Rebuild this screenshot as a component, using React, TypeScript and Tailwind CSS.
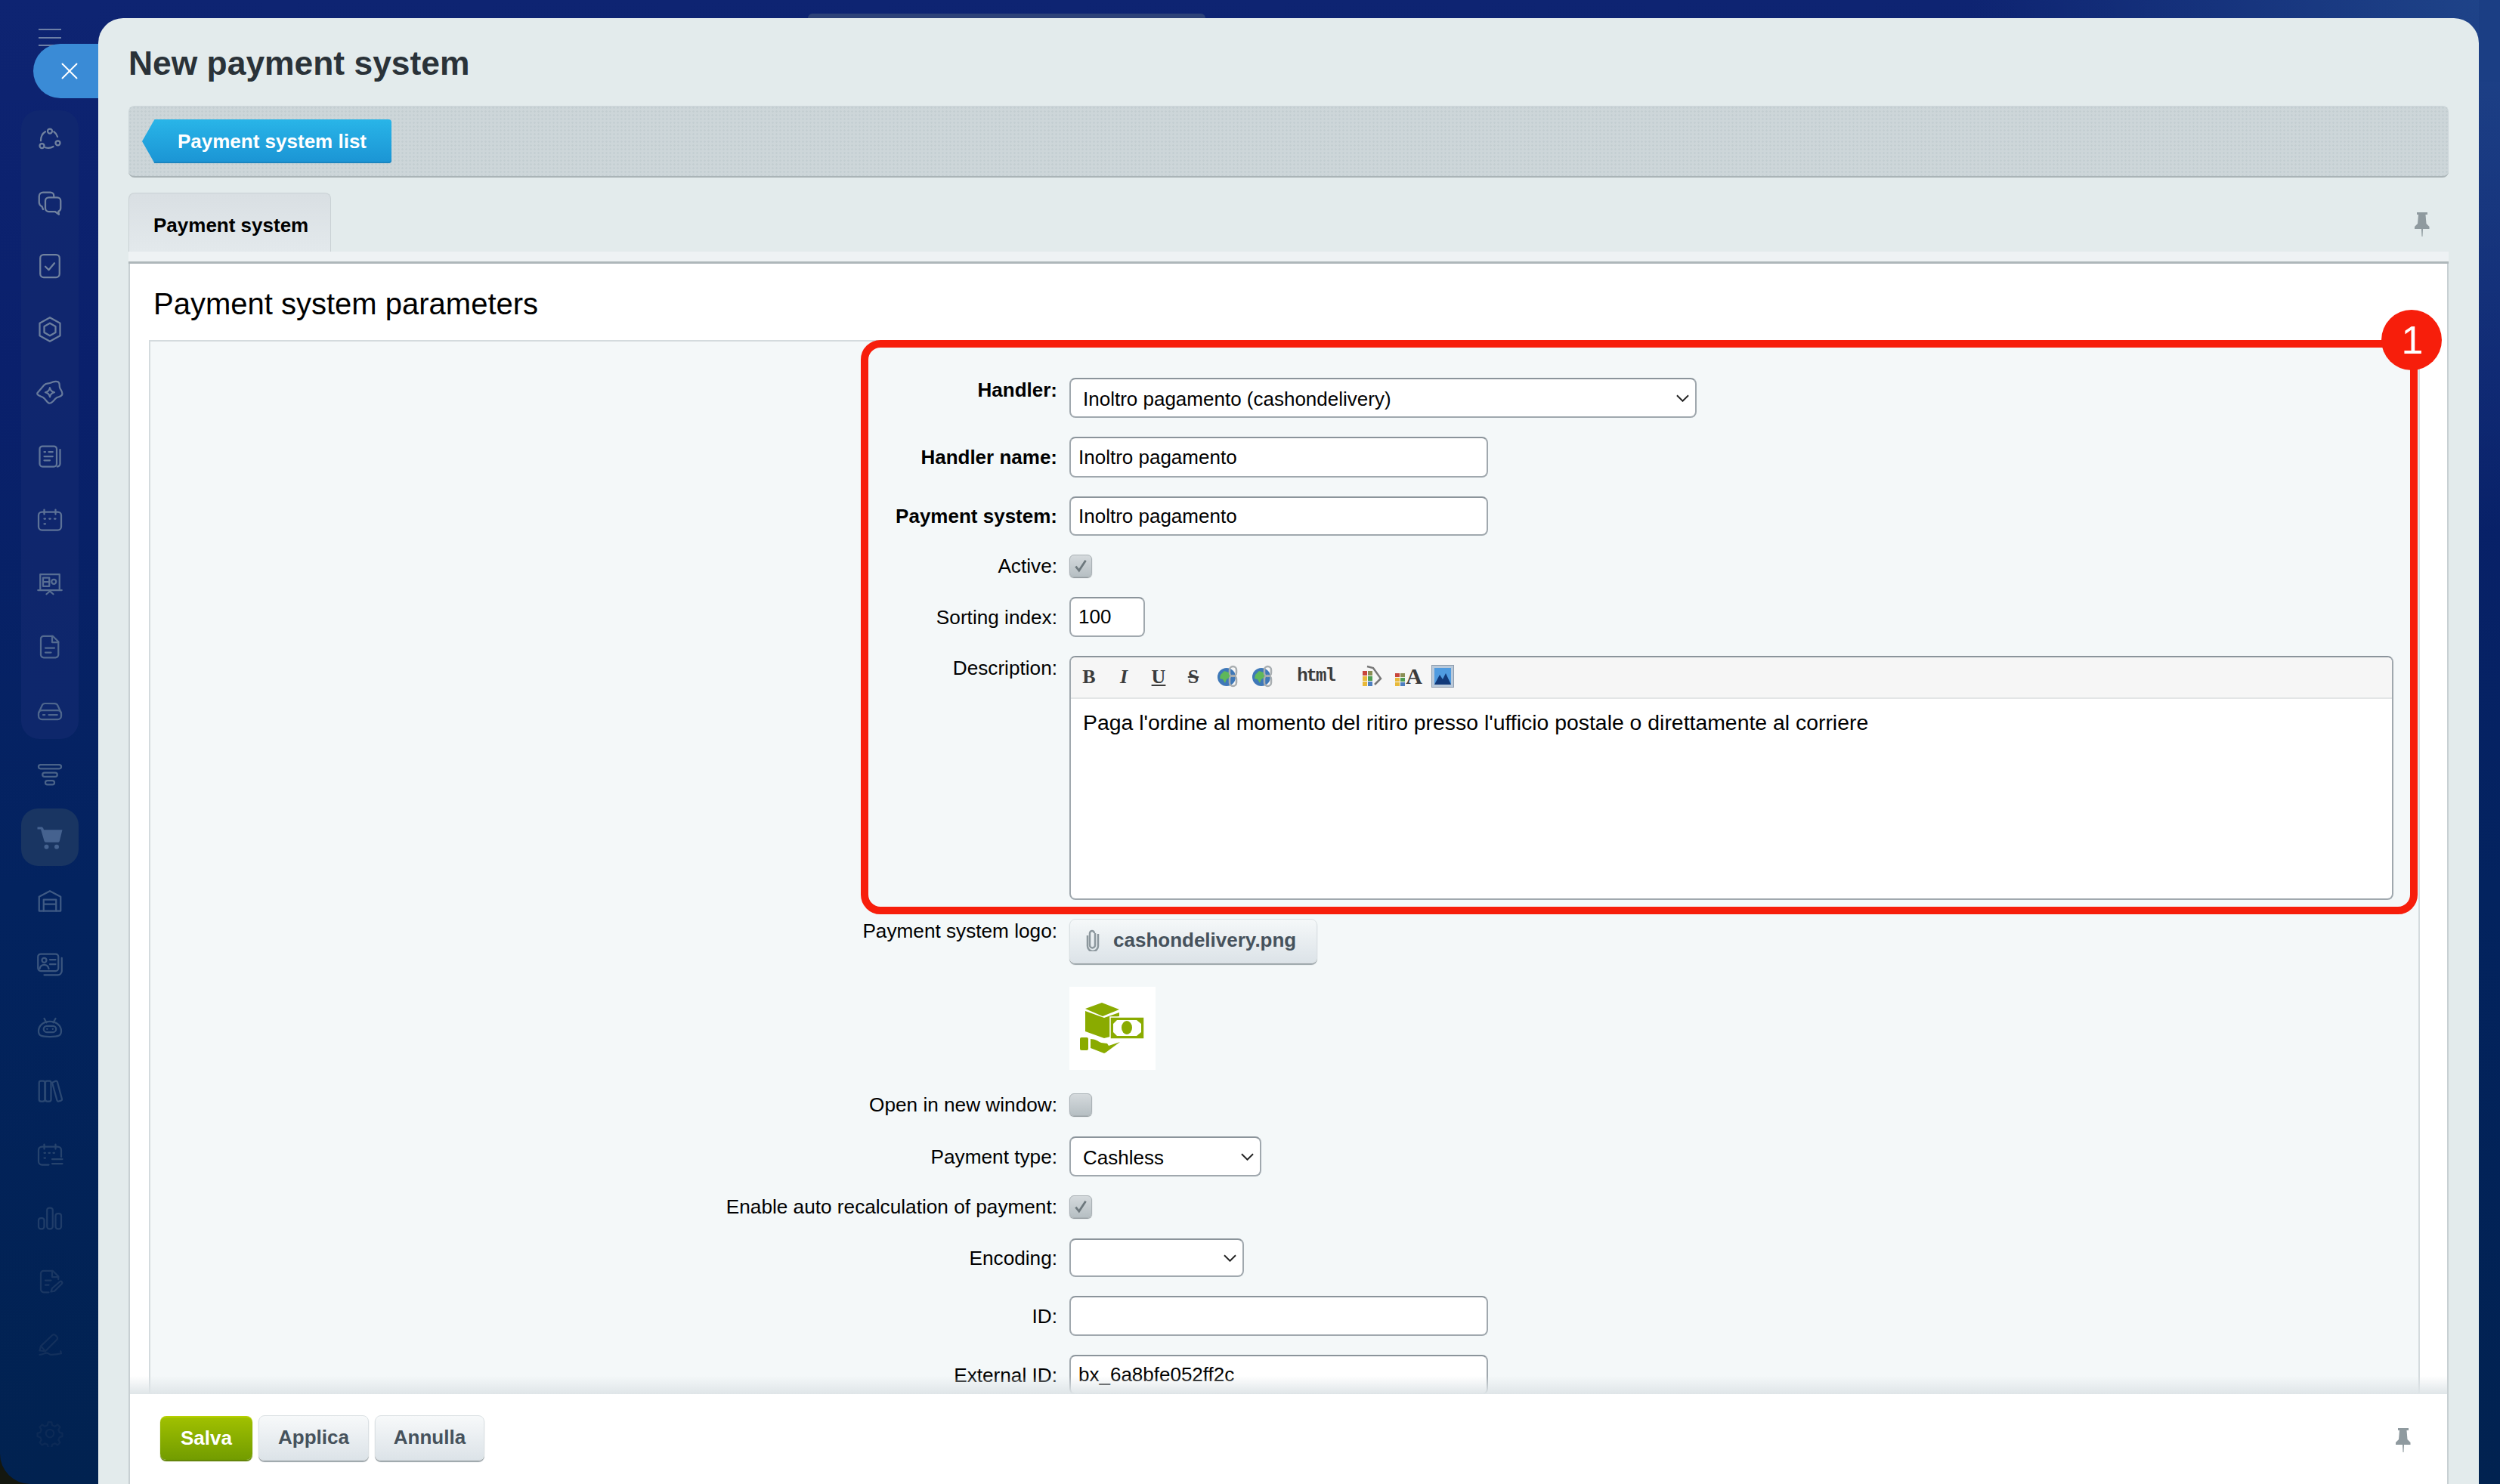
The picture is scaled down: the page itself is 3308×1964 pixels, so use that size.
import React from 'react';
import { X } from 'lucide-react';

const sans = "font-['Liberation_Sans',Arial,sans-serif]";

// sidebar icons, same order as the menu
const menuIcons: React.ReactNode[] = [
  <>
    <circle cx="12" cy="5" r="2" /><circle cx="5" cy="18" r="2" /><circle cx="19" cy="15.5" r="2" />
    <path d="M8 5.5C5.5 7 4 10 4 13.5M15.5 5.5c1.5 1 2.6 2.700 3.200 4.500M8 19.500c2.500.8 5 .5 7-.8" />
  </>,
  <>
    <path d="M15.500 7V6a3 3 0 0 0-3-3H6a3.500 3.500 0 0 0-3.500 3.500v5.500A4 4 0 0 0 5 15.500l1 2.500" />
    <path d="M11 7.500h7.500a3 3 0 0 1 3 3V17a3 3 0 0 1-2 2.800l.5 2.700-3.500-2.500H11a3 3 0 0 1-3-3v-6.500a3 3 0 0 1 3-3z" />
  </>,
  <>
    <rect x="3.500" y="2" width="17" height="20" rx="3" />
    <path d="M8 12.500l3 3 5-6" />
  </>,
  <>
    <path d="M12 1.500l9 5v11l-9 5-9-5v-11z" />
    <path d="M12 6.500l5 2.800v5.400l-5 2.800-5-2.800V9.300z" />
  </>,
  <>
    <path d="M1 12l6-7c2-2 4-1 6-2s6-2 7 0 0 3 1 5 3 4 1.500 6-3.500 1-5.500 3-4 5-6 4-3-4-5-5-6-2-5-4z" />
    <path d="M12 7.500c.5 2.500 1.500 3.500 4 4-2.500.5-3.500 1.500-4 4-.5-2.500-1.500-3.500-4-4 2.500-.5 3.500-1.500 4-4z" />
  </>,
  <>
    <rect x="3" y="3" width="15" height="18" rx="2.500" />
    <path d="M21 6v12.500a2.500 2.500 0 0 1-2.500 2.500M7 8h1M11 8h3.500M7 12h7.500M7 15.500h5" />
  </>,
  <>
    <rect x="2" y="5" width="20" height="16" rx="3" />
    <path d="M7 3v4M17 3v4M7 11h1M11.500 11h1M16 11h1M7 15.500h1" />
  </>,
  <>
    <path d="M1.500 18h21M3.500 18V4h17v14M9 21.500l3-2.500 3 2.500" />
    <rect x="6" y="7" width="5.500" height="7.500" />
    <path d="M6 10.700h5.500" />
    <circle cx="15.500" cy="10.500" r="2" />
  </>,
  <>
    <path d="M6.500 2.500h8l5 5V19a2.500 2.500 0 0 1-2.500 2.500H6.500A2.500 2.500 0 0 1 4 19V5a2.500 2.500 0 0 1 2.500-2.500z" />
    <path d="M14 2.500V8h5.500M8 13h8M8 17h5" />
  </>,
  <>
    <path d="M2 14.500L5 8a3 3 0 0 1 2.800-2h8.400A3 3 0 0 1 19 8l3 6.500" />
    <rect x="2" y="12" width="20" height="8" rx="3" />
    <path d="M6 16h1.500M11 16h7.500" />
  </>,
  <>
    <rect x="2" y="4" width="20" height="3.500" rx="1.750" />
    <rect x="5.500" y="11" width="13" height="3.500" rx="1.750" />
    <rect x="8" y="18" width="8" height="3.500" rx="1.750" />
  </>,
  <g fill="currentColor" stroke="none">
    <path d="M1 3h3.500c.8 0 1.300.4 1.600 1l.6 1.500H23l-2.500 10a1.500 1.500 0 0 1-1.500 1H8.500a1.500 1.500 0 0 1-1.500-1.200L4 5H1z" />
    <circle cx="9" cy="20.500" r="2" /><circle cx="18" cy="20.500" r="2" />
  </g>,
  <>
    <path d="M2.500 21V8.500L12 3.500l9.500 5V21z" />
    <path d="M6.500 21v-10h11v10M6.500 15h11" />
  </>,
  <>
    <rect x="1.500" y="3" width="18" height="15" rx="2.500" />
    <path d="M22.500 6.500V18a3.500 3.500 0 0 1-3.500 3.500H7M12 8h5M12 12h5" />
    <circle cx="7" cy="8.500" r="2" />
    <path d="M3 16c.5-2.500 2-3.500 4-3.500s3.500 1 4 3.500" />
  </>,
  <>
    <path d="M7 4l2 3.500M17 4l-2 3.500" />
    <path d="M12 6.500c6 0 10 4 10 8.500 0 4-2 5-10 5S2 19 2 15c0-4.500 4-8.500 10-8.500z" />
    <rect x="6.500" y="10.500" width="11" height="5.500" rx="2.750" />
    <path d="M9.500 13.200h.1M14.500 13.200h.1" />
  </>,
  <>
    <rect x="2.500" y="3" width="5" height="18" rx="1.500" />
    <rect x="8" y="3" width="5" height="18" rx="1.500" />
    <path d="M14 4.500l3-1.300c.7-.3 1.300 0 1.600.7l4 15c.2.700-.1 1.300-.8 1.500l-2 .6c-.7.200-1.300-.1-1.500-.8z" />
  </>,
  <>
    <path d="M11 21H5a3 3 0 0 1-3-3V8a3 3 0 0 1 3-3h14a3 3 0 0 1 3 3v6" />
    <path d="M7 3v4M17 3v4M7 10.500h1M11 10.500h1M15 10.500h1M7 15h1M14 16h9M14 20h9" />
  </>,
  <>
    <rect x="2" y="12" width="5" height="9.500" rx="2" />
    <rect x="9.500" y="3" width="5" height="18.500" rx="2" />
    <rect x="17" y="8" width="5" height="13.500" rx="2" />
  </>,
  <>
    <path d="M11 21.500H6.500A2.500 2.500 0 0 1 4 19V5a2.500 2.500 0 0 1 2.500-2.500h8l5 5V10" />
    <path d="M14 2.500V8h5.500M8 11h5M8 15h3M13 21l1-3 7-6c1-.8 2.500.8 1.500 2l-6.500 6.500z" />
  </>,
  <>
    <path d="M3 17l1-4L14 3.500c1-1 2-1 3 0l1 1c1 1 1 2 0 3L8 17.500z" />
    <path d="M4 13l4 4.500M3 20.500c3 0 4-1.500 6-1.500s2 1.500 4 1.500 5 0 9-1l-.5-2" />
  </>,
  <>
    <circle cx="12" cy="12" r="3.500" />
    <path d="M10.500 2h3l.6 2.800 2.400 1 2.400-1.500 2.100 2.100-1.500 2.400 1 2.400 2.500.6v3l-2.500.6-1 2.400 1.500 2.400-2.100 2.100-2.400-1.500-2.400 1-.6 2.700h-3l-.6-2.700-2.400-1-2.400 1.500-2.100-2.100 1.500-2.400-1-2.400-2.500-.6v-3l2.500-.6 1-2.400L3 6.400l2.100-2.100 2.400 1.500 2.400-1z" />
  </>,
];

// colour fades out towards the bottom of the menu
const menuColors = [
  'text-[#71829f]', 'text-[#71829f]', 'text-[#71829f]', 'text-[#6c7f9e]', 'text-[#677a9c]',
  'text-[#61769a]', 'text-[#5d7297]', 'text-[#586e93]', 'text-[#536a90]', 'text-[#4e668d]',
  'text-[#4a6389]', 'text-[#45628f]', 'text-[#3f5a84]', 'text-[#3b567f]', 'text-[#314e78]',
  'text-[#2b4873]', 'text-[#26436d]', 'text-[#203d69]', 'text-[#1a3763]', 'text-[#13305c]',
  'text-[#0c2a56]',
];

function MenuIcon({ index }: { index: number }) {
  return (
    <svg viewBox="0 0 24 24" fill="none" stroke="currentColor" strokeWidth="1.500" strokeLinecap="round" strokeLinejoin="round" className={`w-[36px] h-[36px] ${menuColors[index]}`}>
      {menuIcons[index]}
    </svg>
  );
}

function MenuRow({ index, active }: { index: number; active?: boolean }) {
  return (
    <div className={`h-[76px] w-[76px] flex items-center justify-center rounded-[22px] ${active ? 'bg-[#193562]' : ''}`}>
      <MenuIcon index={index} />
    </div>
  );
}

function Sidebar() {
  return (
    <div className="w-[130px] shrink-0 flex flex-col items-start pl-[28px]">
      <div className="h-[146px] shrink-0 pt-[38px] pl-[23px] flex flex-col gap-[8.500px]">
        <div className="w-[30px] h-[2px] bg-[#6d7fa6]" />
        <div className="w-[30px] h-[2px] bg-[#6d7fa6]" />
        <div className="w-[30px] h-[2px] bg-[#6d7fa6]" />
      </div>
      <div className="flex flex-col gap-[8px] rounded-[24px] bg-[#12296f]/70">
        {[0, 1, 2, 3, 4, 5, 6, 7, 8, 9].map((i) => <MenuRow key={i} index={i} />)}
      </div>
      <div className="flex flex-col gap-[8px] mt-[8px]">
        {[10, 11, 12, 13, 14, 15, 16, 17, 18, 19].map((i) => <MenuRow key={i} index={i} active={i === 11} />)}
      </div>
      <div className="mt-[41px]">
        <MenuRow index={20} />
      </div>
    </div>
  );
}

function PinIcon() {
  return (
    <svg viewBox="0 0 20 32" className="w-[20px] h-[32px] text-[#8f9a9f]" fill="currentColor">
      <path d="M3 0h14v3h-2.500l1 12 4 4v3H11l-.5 10h-1L9 22H0v-3l4-4 1-12H3z" />
    </svg>
  );
}

function Label({ children, bold, top }: { children: React.ReactNode; bold?: boolean; top?: boolean }) {
  return (
    <div className={`w-[1200px] shrink-0 text-right leading-[30px] text-[#000] ${bold ? 'font-bold text-[26px]' : 'text-[26.200px]'} ${top ? 'pt-[1px]' : 'self-center'}`}>
      {children}
    </div>
  );
}

function Row({ label, bold, top, children, className }: { label?: string; bold?: boolean; top?: boolean; children: React.ReactNode; className?: string }) {
  return (
    <div className={`flex gap-[16px] ${className ?? ''}`}>
      <Label bold={bold} top={top}>{label}</Label>
      {children}
    </div>
  );
}

function TextBox({ value, width, height = 'h-[53px]' }: { value?: string; width: string; height?: string }) {
  return (
    <div className={`${width} ${height} bg-white border-2 border-[#a0a8ae] border-t-[#8b949b] rounded-[8px] pl-[10px] flex items-center text-[26px] text-[#000]`}>
      {value}
    </div>
  );
}

function SelectBox({ value, width, height = 'h-[53px]' }: { value?: string; width: string; height?: string }) {
  return (
    <div className={`${width} ${height} bg-white border-2 border-[#a0a8ae] border-t-[#8b949b] rounded-[8px] pl-[16px] pr-[8px] flex items-center justify-between text-[26px] text-[#000]`}>
      <span className="pt-[4px]">{value}</span>
      <svg viewBox="0 0 18 10" className="w-[17px] h-[10px]" fill="none" stroke="#222" strokeWidth="2">
        <path d="M1 1l8 8 8-8" />
      </svg>
    </div>
  );
}

function CheckBox({ checked }: { checked?: boolean }) {
  return (
    <div className="w-[30px] h-[30px] rounded-[6px] border border-[#a9b1b5] bg-gradient-to-b from-[#d5dadd] to-[#b6bfc3] shadow-[0_1px_1px_#8a9296] flex items-center justify-center">
      {checked && (
        <svg viewBox="0 0 20 20" className="w-[22px] h-[22px]" fill="none" stroke="#6d787d" strokeWidth="2.500">
          <path d="M4 10.500l4 5 8-12" />
        </svg>
      )}
    </div>
  );
}

function LinkIcon() {
  return (
    <svg viewBox="0 0 30 32" className="w-[30px] h-[32px]">
      <circle cx="13" cy="17" r="12" fill="#3f78b8" />
      <path d="M5 14l5-5 6 2 2 6-5 3-2 5-3-5-4-1z" fill="#5fb85a" />
      <rect x="17" y="3" width="9" height="13" rx="4.500" fill="none" stroke="#a8adb0" strokeWidth="2.500" />
      <rect x="17" y="15" width="9" height="14" rx="4.500" fill="none" stroke="#a8adb0" strokeWidth="2.500" />
    </svg>
  );
}

const toolCell = 'w-[46px] flex justify-center';
const serifTool = "font-['Liberation_Serif',serif] font-bold text-[26px]";

function Toolbar() {
  return (
    <div className="h-[55px] bg-[#f6f6f6] border-b-2 border-[#e3e5e6] flex items-center pl-[1px] pb-[3px] text-[#3b3b3b] rounded-t-[6px]">
      <span className={`${toolCell} ${serifTool}`}>B</span>
      <span className={`${toolCell} ${serifTool} italic`}>I</span>
      <span className={`${toolCell} ${serifTool} underline`}>U</span>
      <span className={`${toolCell} ${serifTool} line-through`}>S</span>
      <span className={toolCell}><LinkIcon /></span>
      <span className={toolCell}><LinkIcon /></span>
      <span className="w-[94px] flex justify-center font-['Liberation_Mono',monospace] font-bold text-[24px] tracking-[-2px]">html</span>
      <span className="w-[56px] flex justify-center">
        <svg viewBox="0 0 30 32" className="w-[30px] h-[32px]">
          <rect x="2" y="9" width="6" height="6" fill="#c8463c" /><rect x="9" y="9" width="6" height="6" fill="#8a8f55" />
          <rect x="2" y="16" width="6" height="6" fill="#e8b93a" /><rect x="9" y="16" width="6" height="6" fill="#4d9e52" />
          <rect x="2" y="23" width="6" height="6" fill="#e8b93a" /><rect x="9" y="23" width="6" height="6" fill="#4d7fc0" />
          <path d="M8 3l8 2 10 14-8 8" fill="none" stroke="#777" strokeWidth="2.500" />
        </svg>
      </span>
      <span className="w-[40px] flex items-end justify-center">
        <svg viewBox="0 0 14 20" className="w-[14px] h-[20px]">
          <rect x="0" y="2" width="6" height="5" fill="#c8463c" /><rect x="7" y="2" width="6" height="5" fill="#8a8f55" />
          <rect x="0" y="8" width="6" height="5" fill="#e8b93a" /><rect x="7" y="8" width="6" height="5" fill="#4d9e52" />
          <rect x="0" y="14" width="6" height="5" fill="#e8b93a" /><rect x="7" y="14" width="6" height="5" fill="#4d7fc0" />
        </svg>
        <span className="font-['Liberation_Serif',serif] font-bold text-[30px] leading-[28px]">A</span>
      </span>
      <span className="w-[50px] flex justify-center">
        <svg viewBox="0 0 30 30" className="w-[30px] h-[30px]">
          <rect x="0.500" y="0.500" width="29" height="29" fill="#b9c9da" stroke="#8e9cac" />
          <rect x="4" y="4" width="22" height="22" fill="#4f9be0" />
          <path d="M4 26l7-13 4 6 4-8 7 15z" fill="#123a7a" />
        </svg>
      </span>
    </div>
  );
}

function CashLogo() {
  return (
    <svg viewBox="0 0 114 110" className="w-[114px] h-[110px]" fill="#8aab00">
      <path d="M21 29l22-8 23 9-22 9z" />
      <path d="M21 32l25 9 20-7v5l-12 4v23l-8 2-25-9z" />
      <rect x="54" y="40" width="45" height="29" stroke="#fff" strokeWidth="1.500" />
      <path fill="#fff" d="M63 44h26l6 5v11l-6 5H63l-5-5V49z" />
      <ellipse cx="76" cy="54" rx="7" ry="9" />
      <rect x="14" y="67" width="11" height="17" rx="2" />
      <path d="M28 69c6 0 10 3 14 5l8 1 2 3 15-5-19 14-2 1-18-7z" />
    </svg>
  );
}

function PaymentForm() {
  return (
    <div className="relative ml-[25px] w-[3005px] h-[1400px] bg-[#f4f8f9] border-l-2 border-r-2 border-t-2 border-[#d4dbde] pt-[48px]">
      <div className="flex flex-col gap-[25px]">
        <Row label="Handler:" bold top>
          <SelectBox value="Inoltro pagamento (cashondelivery)" width="w-[830px]" />
        </Row>
        <Row label="Handler name:" bold>
          <TextBox value="Inoltro pagamento" width="w-[554px]" height="h-[54px]" />
        </Row>
        <Row label="Payment system:" bold>
          <TextBox value="Inoltro pagamento" width="w-[554px]" height="h-[52px]" />
        </Row>
        <Row label="Active:">
          <CheckBox checked />
        </Row>
        <Row label="Sorting index:" className="mt-[1px]">
          <TextBox value="100" width="w-[100px]" />
        </Row>
        <Row label="Description:" top>
          <div className="w-[1752px] h-[323px] bg-white border-2 border-[#a0a8ae] border-t-[#8b949b] rounded-[8px]">
            <Toolbar />
            <div className="pl-[16px] pt-[14px] text-[28.400px] leading-[34px] text-[#000]">
              Paga l'ordine al momento del ritiro presso l'ufficio postale o direttamente al corriere
            </div>
          </div>
        </Row>
        <Row label="Payment system logo:" top>
          <div className="w-[328px] h-[59px] rounded-[8px] border border-[#dbe1e4] bg-gradient-to-b from-[#f5f8f9] to-[#dce3e8] shadow-[0_2px_1px_#9aa3a8] flex items-center pl-[21px] pb-[3px] gap-[18px] text-[26px] font-bold text-[#46525c]">
            <svg viewBox="0 0 18 30" className="w-[18px] h-[30px]" fill="none" stroke="#8c979d" strokeWidth="2.500">
              <path d="M12 6v16a3.500 3.500 0 0 1-7 0V6a3 3 0 0 1 6 0" />
              <path d="M2 9v14a7 7 0 0 0 14 0V7" />
            </svg>
            cashondelivery.png
          </div>
        </Row>
        <Row top className="mt-[6px]">
          <div className="w-[114px] h-[110px] bg-white"><CashLogo /></div>
        </Row>
        <Row label="Open in new window:" className="mt-[6px]">
          <CheckBox />
        </Row>
        <Row label="Payment type:" className="mt-[2px]">
          <SelectBox value="Cashless" width="w-[254px]" />
        </Row>
        <Row label="Enable auto recalculation of payment:">
          <CheckBox checked />
        </Row>
        <Row label="Encoding:" className="mt-[2px]">
          <SelectBox width="w-[231px]" height="h-[51px]" />
        </Row>
        <Row label="ID:">
          <TextBox width="w-[554px]" />
        </Row>
        <Row label="External ID:">
          <TextBox value="bx_6a8bfe052ff2c" width="w-[554px]" />
        </Row>
      </div>

      {/* red annotation drawn over the form */}
      <div className="absolute left-[940px] top-[-2px] w-[2060px] h-[760px] border-[10px] border-[#f71e0b] rounded-[26px]" />
      <div className="absolute left-[2952px] top-[-42px] w-[80px] h-[80px] rounded-full bg-[#f71e0b] flex items-center justify-center text-white text-[52px] leading-none pl-[2px]">
        1
      </div>
    </div>
  );
}

export default function App() {
  return (
    <div className="w-[3308px] h-[1964px] overflow-hidden bg-[#14170f]">
      <div className={`${sans} relative w-full h-full overflow-hidden flex rounded-bl-[40px] bg-[radial-gradient(circle_at_100%_0,#1f4489_0,transparent_700px),linear-gradient(180deg,#0e2472_0%,#0a206c_25%,#03235f_60%,#012250_100%)]`}>
        <Sidebar />

        {/* window behind the slider */}
        <div className="absolute left-[1069px] top-[18px] w-[526px] h-[6px] rounded-t-[8px] bg-[#2d4278]" />
        <div className="absolute left-[3280px] top-0 w-[28px] h-[108px] bg-[#1b3e84]" />

        <div className="absolute left-[44px] top-[58px] w-[90px] h-[72px] rounded-l-[36px] bg-[#3a8bd6] flex items-center pl-[29px]">
          <X className="w-[38px] h-[38px] text-white" strokeWidth={1.200} />
        </div>

        <div className="relative mt-[24px] w-[3150px] h-[1940px] flex flex-col rounded-t-[33px] bg-[#e3ebec] overflow-hidden">
          <div className="px-[40px] pt-[30px] h-[116px] shrink-0 text-[#2a3238] text-[44.400px] leading-[60px] font-bold">
            New payment system
          </div>

          <div className="mx-[40px] h-[95px] shrink-0 rounded-[8px] border-b-2 border-[#aab4b7] bg-[#cdd6d9] bg-[radial-gradient(#c3ced1_1px,transparent_1.500px)] bg-[length:5px_5px] pl-[18px] pt-[18px]">
            <div className="w-[330px] h-[58px] bg-gradient-to-b from-[#29b5e8] to-[#1b94d4] shadow-[inset_0_-2px_0_#1a85c0] [clip-path:polygon(5%_0,100%_0,100%_100%,5%_100%,0_50%)] rounded-[4px] text-white text-[26px] font-bold flex items-center justify-center pl-[14px]">
              Payment system list
            </div>
          </div>

          <div className="mx-[40px] mt-[20px] h-[78px] shrink-0 flex items-stretch justify-between">
            <div className="w-[268px] rounded-t-[8px] border border-b-0 border-[#c9d1d4] bg-gradient-to-b from-[#d9dfe3] to-[#e3e9ec] text-[#000] text-[26px] font-bold flex items-center pl-[32px] pt-[7px]">
              Payment system
            </div>
            <div className="pr-[25px] pt-[26px]"><PinIcon /></div>
          </div>

          <div className="mx-[40px] h-[16px] shrink-0 bg-[#eef2f4] border-b-[3px] border-[#aeb7ba]" />

          <div className="relative flex-1 min-h-0 mx-[40px] bg-white border-x-2 border-[#c8d0d3] overflow-hidden">
            <div className="px-[31px] pt-[28px] h-[101px] text-[40px] leading-[50px] text-[#000]">
              Payment system parameters
            </div>
            <PaymentForm />
            <div className="absolute left-0 right-0 bottom-0 h-[24px] bg-gradient-to-b from-transparent to-[#dfe5e8]" />
          </div>

          <div className="mx-[40px] h-[119px] shrink-0 bg-white border-x-2 border-[#c8d0d3] flex items-center justify-between pl-[40px] pr-[48px] pb-[4px]">
            <div className="flex items-center gap-[8px] text-[26px] font-bold">
              <div className="w-[122px] h-[58px] rounded-[8px] bg-gradient-to-b from-[#a0c000] to-[#729c00] border-t-2 border-[#b5d000] shadow-[0_2px_1px_#5e8000] text-white flex items-center justify-center">Salva</div>
              <div className="w-[146px] h-[60px] rounded-[8px] border border-[#dbe1e4] bg-gradient-to-b from-[#f7f9fa] to-[#dce3e8] shadow-[0_2px_1px_#9aa3a8] text-[#46525c] flex items-center justify-center">Applica</div>
              <div className="w-[145px] h-[60px] rounded-[8px] border border-[#dbe1e4] bg-gradient-to-b from-[#f7f9fa] to-[#dce3e8] shadow-[0_2px_1px_#9aa3a8] text-[#46525c] flex items-center justify-center">Annulla</div>
            </div>
            <div className="mt-[6px]"><PinIcon /></div>
          </div>
        </div>
      </div>
    </div>
  );
}
